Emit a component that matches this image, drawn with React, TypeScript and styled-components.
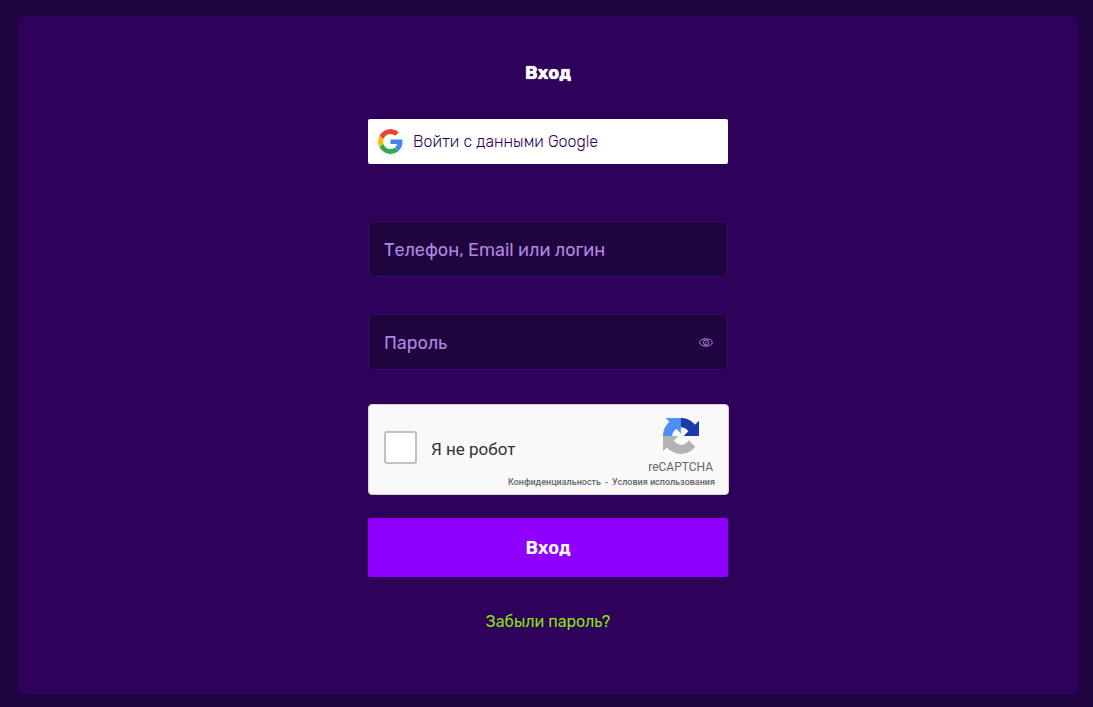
import React, { useState } from "react";
import styled, { createGlobalStyle } from "styled-components";

const GlobalStyle = createGlobalStyle`
  *, *::before, *::after { box-sizing: border-box; }
  body {
    margin: 0;
    background: #1f053f;
    color: #fff;
    font-family: Rubik, Roboto, "Liberation Sans", sans-serif;
  }
  button, input { font: inherit; }
`;

const Page = styled.main`
  display: flex;
  min-height: 100vh;
  padding: 16px 14px 12px 17px;
`;

const Panel = styled.section`
  flex: 1;
  display: flex;
  flex-direction: column;
  align-items: center;
  padding: 45px 16px 48px;
  border-radius: 6px;
  background: #2d0059;
`;

const Form = styled.form`
  display: flex;
  flex-direction: column;
  width: 100%;
  max-width: 360px;
`;

const Title = styled.h1`
  margin: 0 0 34px;
  font-size: 18px;
  line-height: 24px;
  font-weight: 700;
  text-align: center;
  text-shadow: 0 0 1px #fff;
`;

const GoogleButton = styled.button`
  display: flex;
  align-items: center;
  gap: 10px;
  height: 45px;
  margin-bottom: 57px;
  padding: 0 10px;
  border: 0;
  border-radius: 2px;
  background: #fff;
  color: #2e005a;
  font-size: 16px;
  font-weight: 300;
  line-height: 20px;
  cursor: pointer;
`;

const GoogleMark = styled.svg`
  flex: none;
  width: 25px;
  height: 25px;
  border-radius: 50%;
  box-shadow: 0 1px 3px rgba(0, 0, 0, 0.12);
`;

const Field = styled.div<{ $last?: boolean }>`
  display: flex;
  align-items: center;
  height: 56px;
  margin-bottom: ${(p) => (p.$last ? 34 : 37)}px;
  padding: 0 14px 0 15px;
  border: 1px solid #3a0a6e;
  border-radius: 5px;
  background: #1f053f;
`;

const TextInput = styled.input`
  flex: 1;
  min-width: 0;
  height: 100%;
  padding: 2px 0 0;
  border: 0;
  outline: 0;
  background: transparent;
  color: #fff;
  font-size: 18px;
  &::placeholder {
    color: #b287e0;
    opacity: 1;
  }
`;

const EyeButton = styled.button`
  display: flex;
  padding: 0;
  border: 0;
  background: none;
  color: #b287e0;
  cursor: pointer;
`;

const Captcha = styled.div`
  display: flex;
  justify-content: space-between;
  height: 91px;
  margin: 0 -1px 23px 0;
  padding: 0 13px 0 15px;
  border: 1px solid #d3d3d3;
  border-radius: 4px;
  background: #f9f9f9;
  font-family: Roboto, "Liberation Sans", sans-serif;
`;

const CaptchaLabel = styled.label`
  display: flex;
  align-items: center;
  gap: 14px;
  flex: none;
  height: 85px;
  color: #333;
  font-size: 17px;
  white-space: nowrap;
  cursor: pointer;
`;

const CaptchaText = styled.span`
  padding-top: 2px;
`;

const CaptchaBox = styled.input`
  appearance: none;
  width: 33px;
  height: 33px;
  margin: 0;
  border: 2px solid #c1c1c1;
  border-radius: 3px;
  background: #fff;
  &:checked { background: #4285f4; }
`;

const CaptchaBrand = styled.div`
  display: flex;
  flex-direction: column;
  align-items: flex-end;
  width: 0;
  padding-top: 13px;
  color: #666;
`;

const BrandName = styled.div`
  display: flex;
  flex-direction: column;
  align-items: center;
  gap: 5px;
  margin-right: 2px;
  font-size: 12px;
  line-height: 16px;
`;

const Terms = styled.div`
  display: flex;
  gap: 4px;
  font-size: 9px;
  font-weight: 500;
  line-height: 14px;
  white-space: nowrap;
  a {
    color: inherit;
    text-decoration: none;
  }
`;

const SubmitButton = styled.button`
  height: 59px;
  margin-bottom: 35px;
  padding: 0;
  border: 0;
  border-radius: 2px;
  background: #8f00ff;
  color: #fff;
  font-size: 18px;
  font-weight: 600;
  cursor: pointer;
`;

const ForgotLink = styled.a`
  align-self: center;
  color: #8ae010;
  font-size: 16px;
  line-height: 20px;
  text-decoration: none;
`;

function GoogleLogo() {
  return (
    <GoogleMark viewBox="0 0 48 48" aria-hidden="true">
      <path fill="#EA4335" d="M24 9.5c3.54 0 6.71 1.22 9.21 3.6l6.85-6.85C35.9 2.38 30.47 0 24 0 14.62 0 6.51 5.38 2.56 13.22l7.98 6.19C12.43 13.72 17.74 9.5 24 9.5z" />
      <path fill="#4285F4" d="M46.98 24.55c0-1.57-.15-3.09-.38-4.55H24v9.02h12.94c-.58 2.96-2.26 5.48-4.78 7.18l7.73 6c4.51-4.18 7.09-10.36 7.09-17.65z" />
      <path fill="#FBBC05" d="M10.53 28.59c-.48-1.45-.76-2.99-.76-4.59s.27-3.14.76-4.59l-7.98-6.19C.92 16.46 0 20.12 0 24c0 3.88.92 7.54 2.56 10.78l7.97-6.19z" />
      <path fill="#34A853" d="M24 48c6.48 0 11.93-2.13 15.89-5.81l-7.73-6c-2.15 1.45-4.92 2.3-8.16 2.3-6.26 0-11.57-4.22-13.47-9.91l-7.98 6.19C6.51 42.62 14.62 48 24 48z" />
    </GoogleMark>
  );
}

function EyeIcon() {
  return (
    <svg width="14" height="9" viewBox="0 0 14 9" fill="none" stroke="currentColor" aria-hidden="true">
      <ellipse cx="7" cy="4.500" rx="6.300" ry="3.700" />
      <circle cx="7" cy="4.500" r="2.600" />
      <path d="M6.300 5.500L7.700 3.600" />
    </svg>
  );
}

function RecaptchaLogo() {
  return (
    <svg width="36" height="36" viewBox="0 0 64 64" aria-hidden="true">
      <path fill="#1c3aa9" d="M64 31.955l-.033-1.37V4.687l-7.16 7.16C50.948 4.674 42.033.093 32.05.093c-10.4 0-19.622 4.96-25.458 12.64l11.736 11.86a15.55 15.55 0 0 1 4.754-5.334c2.05-1.6 4.952-2.906 8.968-2.906.485 0 .86.057 1.135.163 4.976.393 9.288 3.14 11.828 7.124l-8.307 8.307L64 31.953" />
      <path fill="#4c90f5" d="M31.862.094l-1.37.033H4.594l7.16 7.16C4.58 13.147 0 22.06 0 32.046c0 10.4 4.96 19.622 12.64 25.458L24.5 45.768a15.55 15.55 0 0 1-5.334-4.754c-1.6-2.05-2.906-4.952-2.906-8.968 0-.485.057-.86.163-1.135.393-4.976 3.14-9.288 7.124-11.828l8.307 8.307L31.86.095" />
      <path fill="#b3b3b3" d="M.001 32.045l.033 1.37v25.898l7.16-7.16c5.86 7.173 14.774 11.754 24.76 11.754 10.4 0 19.622-4.96 25.458-12.64l-11.736-11.86a15.55 15.55 0 0 1-4.754 5.334c-2.05 1.6-4.952 2.906-8.968 2.906-.485 0-.86-.057-1.135-.163-4.976-.393-9.288-3.14-11.828-7.124l8.307-8.307c-10.522.04-22.4.066-27.295-.005" />
    </svg>
  );
}

export default function App() {
  const [visible, setVisible] = useState(false);
  return (
    <>
      <GlobalStyle />
      <Page>
        <Panel>
          <Form onSubmit={(e) => e.preventDefault()}>
            <Title>Вход</Title>
            <GoogleButton type="button">
              <GoogleLogo />
              Войти с данными Google
            </GoogleButton>
            <Field>
              <TextInput type="text" aria-label="Телефон, Email или логин" placeholder="Телефон, Email или логин" />
            </Field>
            <Field $last>
              <TextInput type={visible ? "text" : "password"} aria-label="Пароль" placeholder="Пароль" />
              <EyeButton type="button" aria-label="Показать пароль" onClick={() => setVisible(!visible)}>
                <EyeIcon />
              </EyeButton>
            </Field>
            <Captcha>
              <CaptchaLabel>
                <CaptchaBox type="checkbox" />
                <CaptchaText>Я не робот</CaptchaText>
              </CaptchaLabel>
              <CaptchaBrand>
                <BrandName>
                  <RecaptchaLogo />
                  reCAPTCHA
                </BrandName>
                <Terms>
                  <a href="#privacy">Конфиденциальность</a>
                  <span>-</span>
                  <a href="#terms">Условия использования</a>
                </Terms>
              </CaptchaBrand>
            </Captcha>
            <SubmitButton type="submit">Вход</SubmitButton>
            <ForgotLink href="#forgot">Забыли пароль?</ForgotLink>
          </Form>
        </Panel>
      </Page>
    </>
  );
}
